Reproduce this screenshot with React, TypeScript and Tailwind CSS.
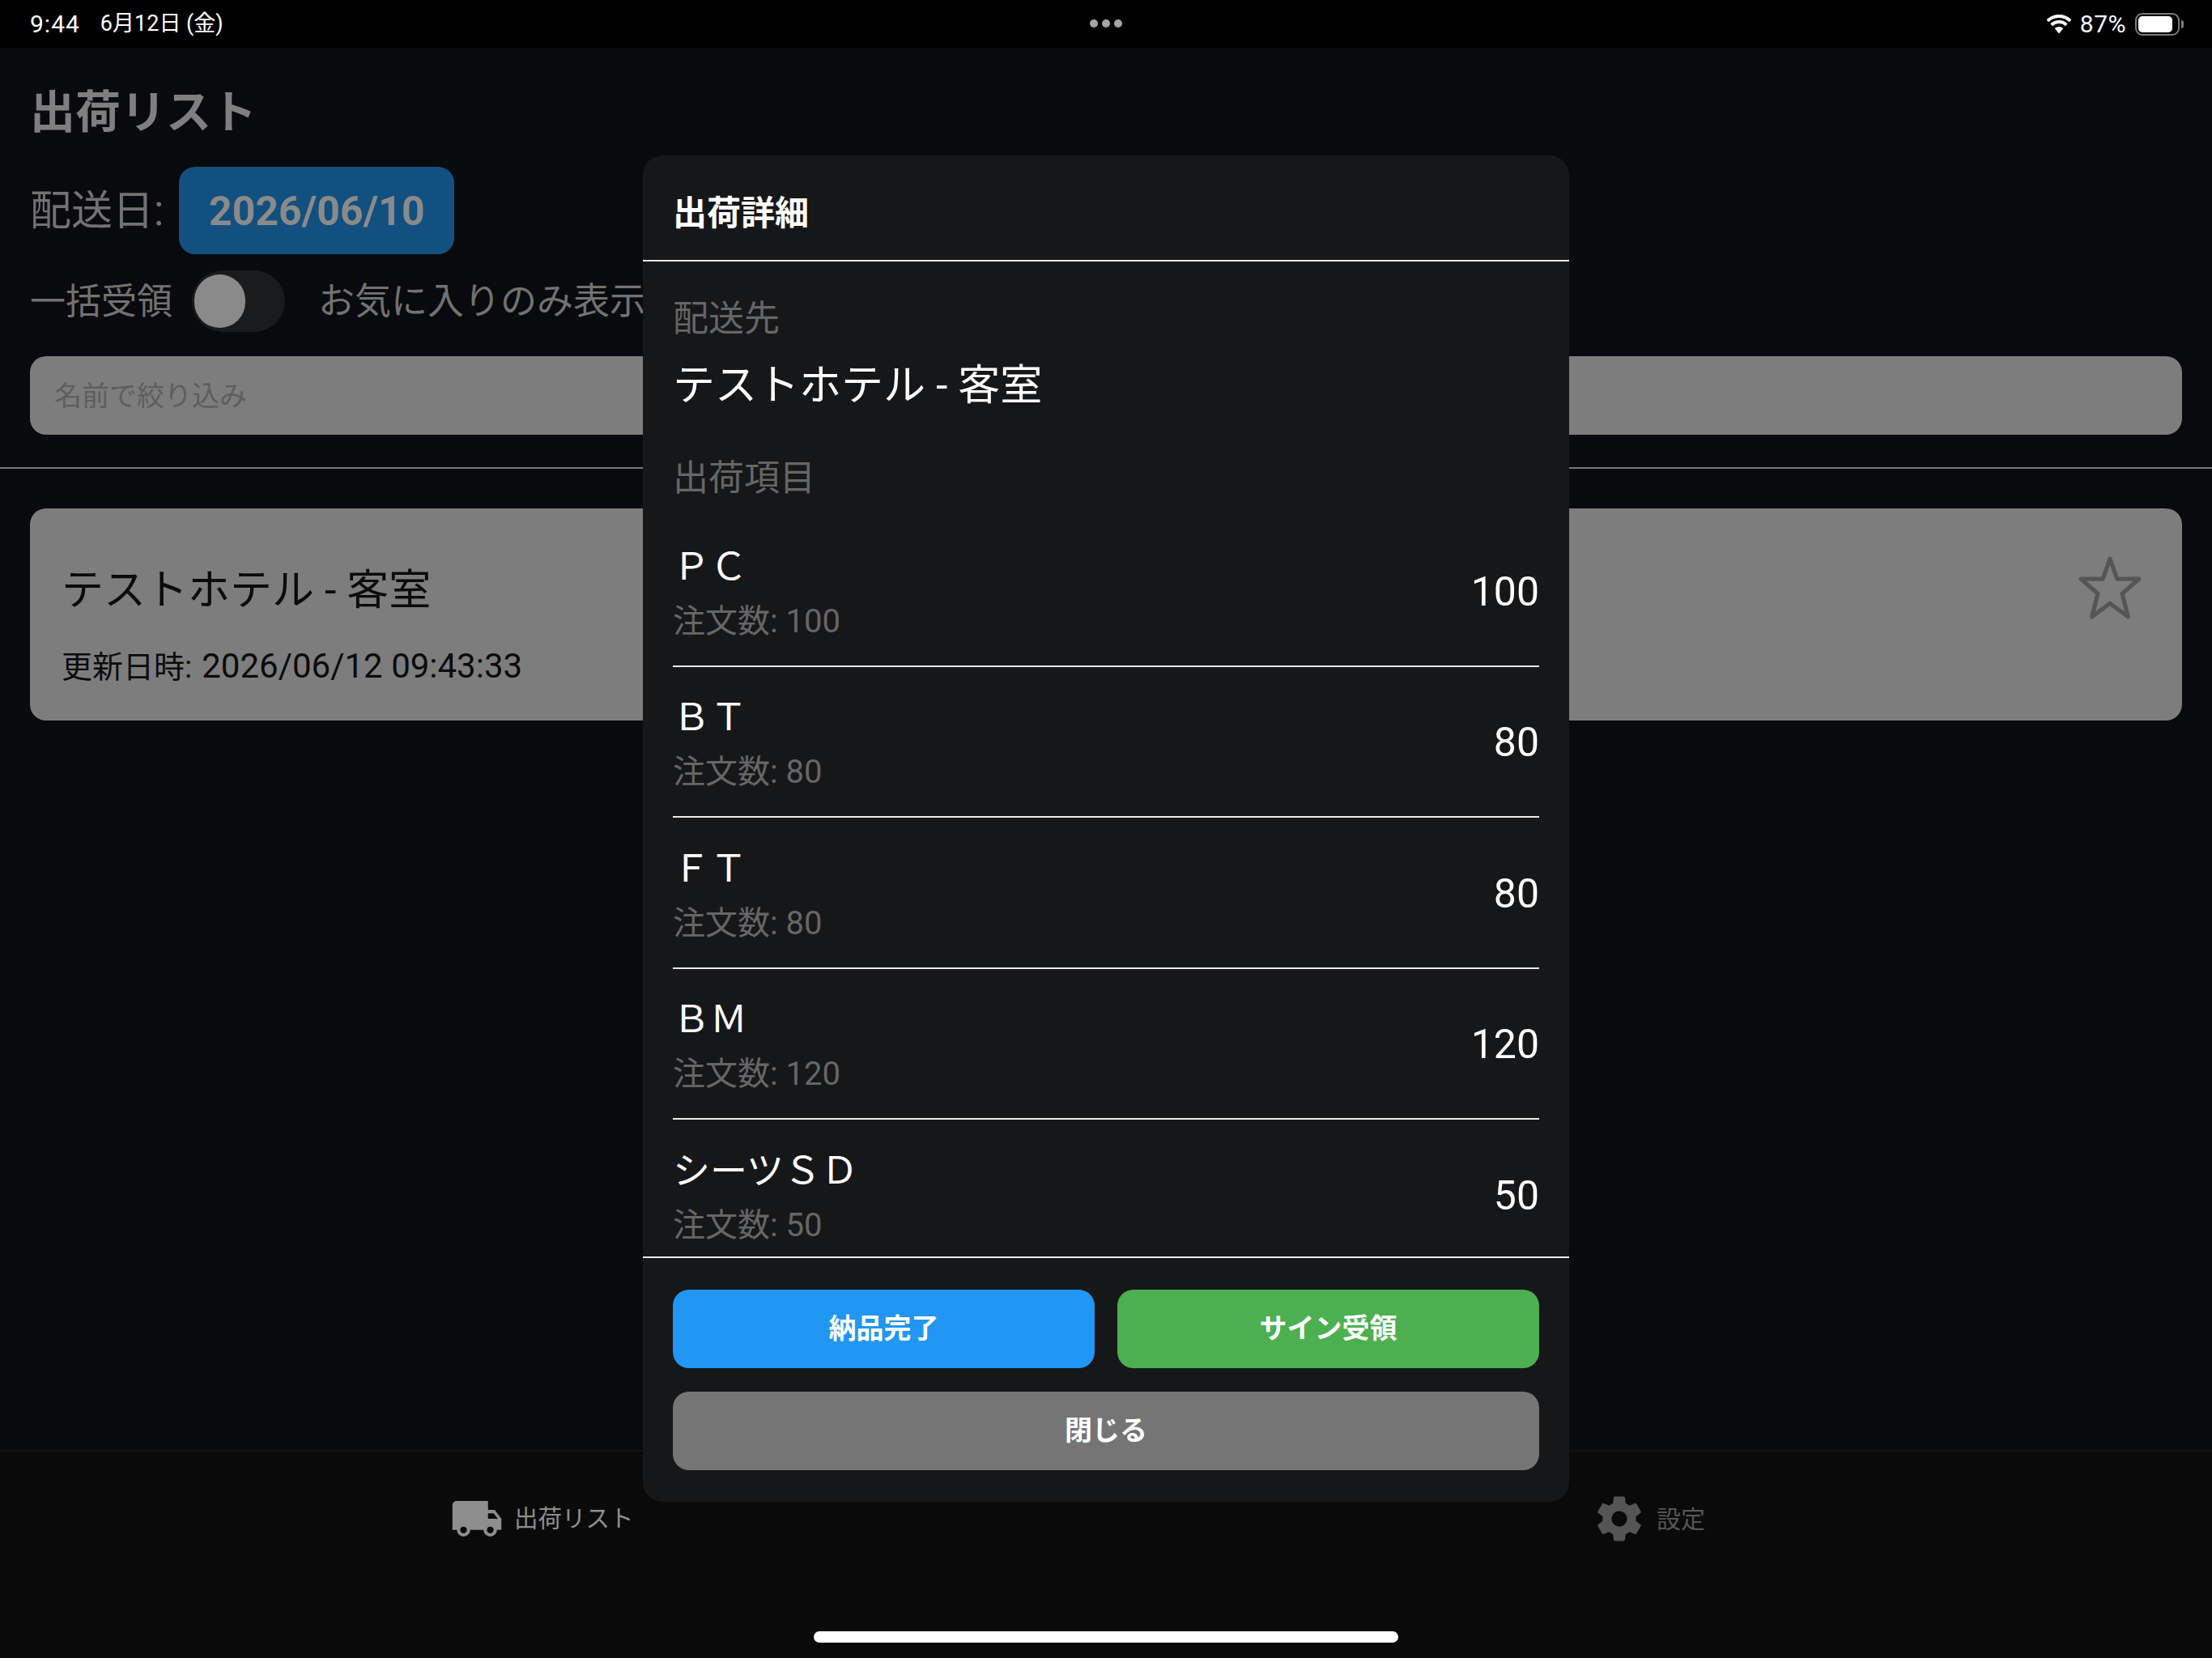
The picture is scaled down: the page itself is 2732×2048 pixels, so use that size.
// App.tsx
const items = [
  { name: "ＰＣ", ordered: 100 },
  { name: "ＢＴ", ordered: 80 },
  { name: "ＦＴ", ordered: 80 },
  { name: "ＢＭ", ordered: 120 },
  { name: "シーツＳＤ", ordered: 50 },
];

const StatusBar = () => (
  <div className="relative flex h-[59px] shrink-0 items-center justify-between bg-black pl-[37px] pr-[35px] text-white">
    <div className="flex items-center gap-[25px]">
      <span className="text-[30px] tracking-[1px]">9:44</span>
      <span className="text-[27px]">6月12日 (金)</span>
    </div>
    <div className="absolute left-[1346px] top-[24px] flex gap-[5px]">
      <span className="h-[10px] w-[10px] rounded-full bg-[#a5a5a5]" />
      <span className="h-[10px] w-[10px] rounded-full bg-[#a5a5a5]" />
      <span className="h-[10px] w-[10px] rounded-full bg-[#a5a5a5]" />
    </div>
    <div className="flex items-center">
      <svg width="30" height="24" viewBox="0 0 30 24" fill="none" className="mr-[11px]">
        <path d="M15 23.5 9.7 17A8 8 0 0 1 20.3 17Z" fill="#fff" />
        <path d="M5.8 12.8A13 13 0 0 1 24.2 12.8" stroke="#fff" strokeWidth="4" />
        <path d="M0.9 7.9A20 20 0 0 1 29.1 7.9" stroke="#fff" strokeWidth="4" />
      </svg>
      <span className="text-[30px] tracking-[0.5px]">87%</span>
      <div className="ml-[11px] flex items-center">
        <div className="flex h-[28px] w-[55px] items-center rounded-[9px] border-2 border-[#7b7b7b] p-[2px]">
          <div className="h-[20px] w-[42px] rounded-[5px] bg-white" />
        </div>
        <div className="ml-[2px] h-[10px] w-[3px] rounded-r-full bg-[#7b7b7b]" />
      </div>
    </div>
  </div>
);

const ShipmentList = () => (
  <main className="flex-1">
    <div className="px-[37px] pt-[43px]">
      <h1 className="pt-[2px] text-[56px] font-bold leading-[70px] text-[#7f7f7f]">出荷リスト</h1>
      <div className="mt-[32px] flex h-[108px] items-center">
        <span className="pt-[2px] text-[51px] text-[#727272]">配送日:</span>
        <button className="ml-[19px] h-[108px] w-[340px] rounded-[20px] bg-[#12507f] pt-[2px] text-[50px] font-bold text-[#8a8a8a]">
          2026/06/10
        </button>
      </div>
      <div className="mt-[20px] flex h-[76px] items-center">
        <span className="pt-[2px] text-[44px] text-[#727272]">一括受領</span>
        <div className="ml-[24px] flex h-[76px] w-[115px] items-center rounded-full bg-[#1a1b1d] pl-[3px]">
          <div className="h-[66px] w-[63px] rounded-full bg-[#8a8a8a]" />
        </div>
        <span className="ml-[41px] whitespace-nowrap pt-[2px] text-[45px] text-[#727272]">お気に入りのみ表示</span>
      </div>
      <input
        readOnly
        placeholder="名前で絞り込み"
        className="mt-[30px] block h-[97px] w-full rounded-[20px] bg-[#7d7d7d] px-[30px] text-[34px] placeholder:text-[#5e5e5e]"
      />
    </div>
    <div className="mt-[40px] h-[2px] bg-[#777]" />
    <div className="px-[37px] pt-[49px]">
      <div className="flex h-[262px] items-center justify-between rounded-[20px] bg-[#7d7d7d] pl-[39px] pr-[49px]">
        <div className="pt-[30px] text-[#0b0b0b]">
          <div className="text-[52px] leading-[66px]">テストホテル - 客室</div>
          <div className="mt-[32px] flex items-baseline text-[42px] leading-[56px]">
            <span className="text-[38px]">更新日時:</span>
            <span className="ml-[12px]">2026/06/12 09:43:33</span>
          </div>
        </div>
        <svg width="80" height="80" viewBox="0 0 77 77" fill="none" stroke="#555" strokeWidth="5" strokeLinejoin="round" className="mb-[66px]">
          <path d="M38.5 4 47 28H73L53 45.5 60 73 38.5 57 17 73 24 45.5 4 28H30Z" />
        </svg>
      </div>
    </div>
  </main>
);

const TabBar = () => (
  <nav className="flex h-[257px] shrink-0 flex-col border-t-2 border-[#121314] bg-[#0a0a0b]">
    <div className="flex h-[170px] items-start justify-between pl-[556px] pr-[626px] pt-[50px]">
      <div className="flex items-center gap-[13px] text-[29.5px] text-[#8e8e8e]">
        <svg width="66" height="66" viewBox="0 0 24 24" fill="currentColor">
          <path d="M18,18.5A1.5,1.5 0 0,1 16.5,17A1.5,1.5 0 0,1 18,15.5A1.5,1.5 0 0,1 19.5,17A1.5,1.5 0 0,1 18,18.5M19.5,9.5L21.46,12H17V9.5M6,18.5A1.5,1.5 0 0,1 4.5,17A1.5,1.5 0 0,1 6,15.5A1.5,1.5 0 0,1 7.5,17A1.5,1.5 0 0,1 6,18.5M20,8H17V4H3C1.89,4 1,4.89 1,6V17H3A3,3 0 0,0 6,20A3,3 0 0,0 9,17H15A3,3 0 0,0 18,20A3,3 0 0,0 21,17H23V12L20,8Z" />
        </svg>
        <span>出荷リスト</span>
      </div>
      <div className="flex items-center gap-[13px] text-[30px] text-[#555]">
        <svg width="66" height="66" viewBox="0 0 24 24" fill="currentColor">
          <path d="M12,15.5A3.5,3.5 0 0,1 8.5,12A3.5,3.5 0 0,1 12,8.5A3.5,3.5 0 0,1 15.5,12A3.5,3.5 0 0,1 12,15.5M19.43,12.97C19.47,12.65 19.5,12.33 19.5,12C19.5,11.67 19.47,11.34 19.43,11L21.54,9.37C21.73,9.22 21.78,8.95 21.66,8.73L19.66,5.27C19.54,5.05 19.27,4.96 19.05,5.05L16.56,6.05C16.04,5.66 15.5,5.32 14.87,5.07L14.5,2.42C14.46,2.18 14.25,2 14,2H10C9.75,2 9.54,2.18 9.5,2.42L9.13,5.07C8.5,5.32 7.96,5.66 7.44,6.05L4.95,5.05C4.73,4.96 4.46,5.05 4.34,5.27L2.34,8.73C2.21,8.95 2.27,9.22 2.46,9.37L4.57,11C4.53,11.34 4.5,11.67 4.5,12C4.5,12.33 4.53,12.65 4.57,12.97L2.46,14.63C2.27,14.78 2.21,15.05 2.34,15.27L4.34,18.73C4.46,18.95 4.73,19.03 4.95,18.95L7.44,17.94C7.96,18.34 8.5,18.68 9.13,18.93L9.5,21.58C9.54,21.82 9.75,22 10,22H14C14.25,22 14.46,21.82 14.5,21.58L14.87,18.93C15.5,18.67 16.04,18.34 16.56,17.94L19.05,18.95C19.27,19.03 19.54,18.95 19.66,18.73L21.66,15.27C21.78,15.05 21.73,14.78 21.54,14.63L19.43,12.97Z" />
        </svg>
        <span>設定</span>
      </div>
    </div>
    <div className="mt-[52px] flex justify-center">
      <div className="h-[14px] w-[722px] rounded-full bg-white" />
    </div>
  </nav>
);

const DetailModal = () => (
  <div className="absolute left-[794px] top-[192px] flex h-[1663px] w-[1144px] flex-col rounded-[24px] bg-[#161719] text-white">
    <div className="flex h-[131px] shrink-0 items-center border-b-2 border-[#ececec] px-[37px] pt-[14px]">
      <h2 className="text-[42px] font-bold">出荷詳細</h2>
    </div>
    <div className="flex-1 overflow-hidden px-[37px]">
      <div className="mt-[39px] text-[44px] leading-[64px] text-[#666]">配送先</div>
      <div className="mt-[19px] text-[52px] leading-[64px]">テストホテル - 客室</div>
      <div className="mt-[50px] text-[44px] leading-[64px] text-[#666]">出荷項目</div>
      <div className="mt-[14px]">
        {items.map((item, i) => (
          <div
            key={item.name + i}
            className="flex h-[186.5px] items-center justify-between border-b-2 border-[#ececec] pt-[6px]"
          >
            <div>
              <div className="text-[46px] leading-[62px]">{item.name}</div>
              <div className="mt-[9px] text-[40px] leading-[56px] text-[#666]">注文数: {item.ordered}</div>
            </div>
            <div className="pb-[2px] text-[50px]">{item.ordered}</div>
          </div>
        ))}
      </div>
    </div>
    <div className="flex shrink-0 flex-col gap-[29px] border-t-2 border-[#ececec] px-[37px] pb-[39px] pt-[39px]">
      <div className="flex gap-[28px]">
        <button className="h-[97px] flex-1 rounded-[20px] bg-[#2196f3] text-[34px] font-bold">納品完了</button>
        <button className="h-[97px] flex-1 rounded-[20px] bg-[#4caf50] text-[34px] font-bold">サイン受領</button>
      </div>
      <button className="h-[97px] rounded-[20px] bg-[#757575] text-[34px] font-bold">閉じる</button>
    </div>
  </div>
);

export default function App() {
  return (
    <div className="relative flex h-[2048px] w-[2732px] flex-col overflow-hidden bg-[#090a0d] font-['Roboto','Noto_Sans_CJK_JP',sans-serif]">
      <StatusBar />
      <ShipmentList />
      <TabBar />
      <DetailModal />
    </div>
  );
}
